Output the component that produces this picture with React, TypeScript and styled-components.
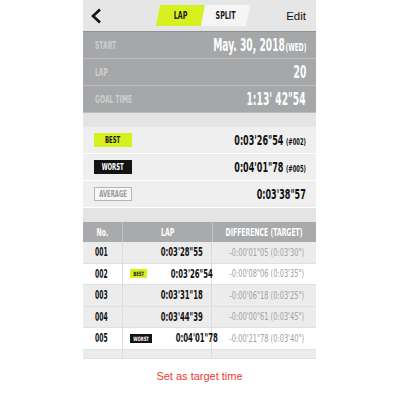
import React from 'react';
import styled, { createGlobalStyle, css } from 'styled-components';

const cond = `"DejaVu Sans Condensed", "DejaVu Sans", sans-serif`;

const colors = {
  header: '#e6e6e6',
  info: '#a5a7a9',
  infoLine: '#bcbdbf',
  infoLabel: '#cdcecf',
  gap: '#e4e4e4',
  stat: '#efefef',
  lime: '#d6f020',
  tableHead: '#a9aaab',
  rowGray: '#ececec',
  diff: '#a2a2a2',
  red: '#ec3b35',
};

// the reference uses a narrow display face; squeeze DejaVu Condensed to match
const narrow = (k: number, origin = 'center') => css`
  display: inline-block;
  white-space: nowrap;
  transform: scaleX(${k});
  transform-origin: ${origin} center;
`;

const GlobalStyle = createGlobalStyle`
  html, body {
    margin: 0;
    padding: 0;
    background: #ffffff;
  }
  body {
    font-family: "Liberation Sans", Arial, sans-serif;
  }
`;

type Badge = 'best' | 'worst' | 'average';

const stats: { kind: Badge; label: string; time: string; lap?: string }[] = [
  { kind: 'best', label: 'BEST', time: `0:03'26"54`, lap: '(#002)' },
  { kind: 'worst', label: 'WORST', time: `0:04'01"78`, lap: '(#005)' },
  { kind: 'average', label: 'AVERAGE', time: `0:03'38"57` },
];

const laps: { no: string; time: string; diff: string; badge?: Badge }[] = [
  { no: '001', time: `0:03'28"55`, diff: `-0:00'01"05 (0:03'30")` },
  { no: '002', time: `0:03'26"54`, diff: `-0:00'08"06 (0:03'35")`, badge: 'best' },
  { no: '003', time: `0:03'31"18`, diff: `-0:00'06"18 (0:03'25")` },
  { no: '004', time: `0:03'44"39`, diff: `-0:00'00"61 (0:03'45")` },
  { no: '005', time: `0:04'01"78`, diff: `-0:00'21"78 (0:03'40")`, badge: 'worst' },
];

export default function App() {
  return (
    <>
      <GlobalStyle />
      <Screen>
        <Header>
          <BackButton>
            <svg width="12" height="16" viewBox="0 0 12 16">
              <polyline
                points="10,1.5 3,8 10,14.5"
                fill="none"
                stroke="#111"
                strokeWidth="2.6"
              />
            </svg>
          </BackButton>
          <Tabs>
            <Tab active>
              <TabText>LAP</TabText>
            </Tab>
            <Tab>
              <TabText>SPLIT</TabText>
            </Tab>
          </Tabs>
          <EditButton>Edit</EditButton>
        </Header>

        <InfoRow>
          <InfoLabel>START</InfoLabel>
          <InfoValue>
            May. 30, 2018<small>(WED)</small>
          </InfoValue>
        </InfoRow>
        <InfoRow>
          <InfoLabel>LAP</InfoLabel>
          <InfoValue>20</InfoValue>
        </InfoRow>
        <InfoRow>
          <InfoLabel>GOAL TIME</InfoLabel>
          <InfoValue>1:13' 42"54</InfoValue>
        </InfoRow>

        <Spacer />

        {stats.map((s) => (
          <StatRow key={s.kind}>
            <StatBadge kind={s.kind}>
              <BadgeText>{s.label}</BadgeText>
            </StatBadge>
            <StatValue>
              {s.time}
              {s.lap && <small>{s.lap}</small>}
            </StatValue>
          </StatRow>
        ))}

        <Spacer />

        <TableHead>
          <HeadCell>
            <HeadText>No.</HeadText>
          </HeadCell>
          <HeadCell>
            <HeadText>LAP</HeadText>
          </HeadCell>
          <HeadCell>
            <HeadText>DIFFERENCE (TARGET)</HeadText>
          </HeadCell>
        </TableHead>
        {laps.map((l) => (
          <LapRow key={l.no} highlight={!!l.badge}>
            <NoCell>
              <NoText>{l.no}</NoText>
            </NoCell>
            <LapCell>
              {l.badge && (
                <MiniBadge kind={l.badge}>
                  <MiniBadgeText>{l.badge.toUpperCase()}</MiniBadgeText>
                </MiniBadge>
              )}
              <LapTime>{l.time}</LapTime>
            </LapCell>
            <DiffCell>
              <DiffText>{l.diff}</DiffText>
            </DiffCell>
          </LapRow>
        ))}
        <LapRow highlight={false} short>
          <NoCell />
          <LapCell />
          <DiffCell />
        </LapRow>

        <Footer>
          <TargetLink>Set as target time</TargetLink>
        </Footer>
      </Screen>
    </>
  );
}

const Screen = styled.div`
  width: 233px;
  margin-left: 83px;
  background: #ffffff;
  overflow: hidden;
`;

const Header = styled.div`
  height: 32px;
  background: ${colors.header};
  border-bottom: 1px solid #8e9092;
  box-sizing: border-box;
  display: flex;
  align-items: center;
  justify-content: space-between;
  padding: 0 10px 0 7px;
`;

const BackButton = styled.div`
  display: flex;
  align-items: center;
  width: 40px;
  padding-top: 1px;
`;

const Tabs = styled.div`
  display: flex;
  margin-left: 26px;
`;

const Tab = styled.div<{ active?: boolean }>`
  width: 49px;
  height: 21px;
  display: flex;
  align-items: center;
  justify-content: center;
  background: ${({ active }) => (active ? colors.lime : '#f5f5f5')};
  clip-path: polygon(4px 0, 100% 0, calc(100% - 4px) 100%, 0 100%);
  & + & {
    margin-left: -4px;
  }
`;

const TabText = styled.span`
  font-family: ${cond};
  font-size: 11px;
  font-weight: bold;
  color: #1a1a1a;
  ${narrow(0.64)}
`;

const EditButton = styled.div`
  font-size: 11.5px;
  color: #111;
  flex: 1;
  text-align: right;
`;

const InfoRow = styled.div`
  height: 27px;
  box-sizing: border-box;
  background: ${colors.info};
  border-bottom: 1px solid ${colors.infoLine};
  display: flex;
  align-items: center;
  justify-content: space-between;
  padding: 0 10px 0 12px;
`;

const InfoLabel = styled.span`
  font-family: ${cond};
  font-size: 10.5px;
  font-weight: bold;
  color: ${colors.infoLabel};
  ${narrow(0.64, 'left')}
`;

const InfoValue = styled.span`
  font-family: ${cond};
  font-size: 17px;
  font-weight: bold;
  color: #ffffff;
  ${narrow(0.6, 'right')}
  & small {
    font-size: 11px;
    margin-left: 1px;
  }
`;

const Spacer = styled.div`
  height: 14px;
  background: ${colors.gap};
`;

const StatRow = styled.div`
  height: 27px;
  box-sizing: border-box;
  background: ${colors.stat};
  border-bottom: 1px solid #ffffff;
  display: flex;
  align-items: center;
  justify-content: space-between;
  padding: 0 10px 0 11px;
  &:last-of-type {
    border-bottom: none;
  }
`;

const badgeStyles: Record<Badge, string> = {
  best: `background: ${colors.lime}; color: #1a1a1a; border: 1px solid ${colors.lime};`,
  worst: `background: #141414; color: #ffffff; border: 1px solid #141414;`,
  average: `background: #f7f7f7; color: #9a9a9a; border: 1px solid #b5b5b5;`,
};

const StatBadge = styled.span<{ kind: Badge }>`
  width: 38px;
  height: 14px;
  box-sizing: border-box;
  display: flex;
  align-items: center;
  justify-content: center;
  ${({ kind }) => badgeStyles[kind]}
`;

const BadgeText = styled.span`
  font-family: ${cond};
  font-size: 9px;
  font-weight: bold;
  ${narrow(0.66)}
`;

const StatValue = styled.span`
  font-family: ${cond};
  font-size: 14px;
  font-weight: bold;
  color: #111;
  ${narrow(0.64, 'right')}
  & small {
    font-size: 9px;
    margin-left: 4px;
  }
`;

const columns = `grid-template-columns: 39px 90px minmax(0, 1fr);`;

const TableHead = styled.div`
  display: grid;
  ${columns}
  height: 20px;
  background: ${colors.tableHead};
`;

const HeadCell = styled.div`
  display: flex;
  align-items: center;
  justify-content: center;
  min-width: 0;
  border-left: 1px solid #c3c4c5;
  &:first-child {
    border-left: none;
  }
`;

const HeadText = styled.span`
  font-family: ${cond};
  font-size: 11px;
  font-weight: bold;
  color: #ffffff;
  flex-shrink: 0;
  ${narrow(0.62)}
`;

const LapRow = styled.div<{ highlight: boolean; short?: boolean }>`
  display: grid;
  ${columns}
  height: ${({ short }) => (short ? '9px' : '21.5px')};
  box-sizing: border-box;
  background: ${({ highlight }) => (highlight ? '#ffffff' : colors.rowGray)};
  border-bottom: 1px solid #e0e0e0;
`;

const NoCell = styled.div`
  display: flex;
  align-items: center;
  padding-left: 12px;
`;

const NoText = styled.span`
  font-family: ${cond};
  font-size: 12px;
  font-weight: bold;
  color: #111;
  ${narrow(0.56, 'left')}
`;

const LapCell = styled.div`
  display: flex;
  align-items: center;
  padding: 0 8px 0 7px;
  border-left: 1px solid #dcdcdc;
  border-right: 1px solid #dcdcdc;
`;

const MiniBadge = styled.span<{ kind: Badge }>`
  width: 22px;
  height: 9px;
  box-sizing: border-box;
  display: flex;
  align-items: center;
  justify-content: center;
  ${({ kind }) => badgeStyles[kind]}
`;

const MiniBadgeText = styled.span`
  font-family: ${cond};
  font-size: 6px;
  font-weight: bold;
  ${narrow(0.7)}
`;

const LapTime = styled.span`
  margin-left: auto;
  font-family: ${cond};
  font-size: 12px;
  font-weight: bold;
  color: #111;
  ${narrow(0.64, 'right')}
`;

const DiffCell = styled.div`
  display: flex;
  align-items: center;
  justify-content: flex-end;
  min-width: 0;
  padding-right: 12px;
`;

const DiffText = styled.span`
  font-family: ${cond};
  font-size: 10px;
  color: ${colors.diff};
  flex-shrink: 0;
  ${narrow(0.74, 'right')}
`;

const Footer = styled.div`
  display: flex;
  justify-content: center;
  padding-top: 11px;
  height: 44px;
`;

const TargetLink = styled.span`
  font-size: 11px;
  color: ${colors.red};
`;
